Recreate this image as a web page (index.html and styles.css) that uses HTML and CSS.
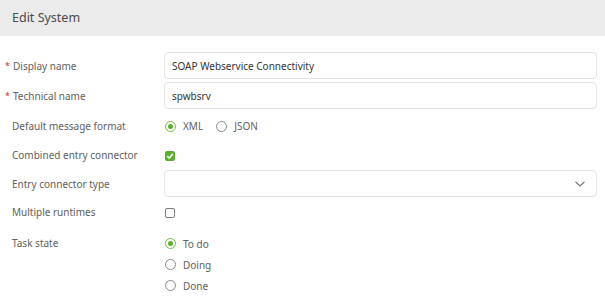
FILE: index.html
```html
<!DOCTYPE html>
<html lang="en">
<head>
  <meta charset="UTF-8">
  <title>Edit System</title>
  <link rel="stylesheet" href="styles.css">
</head>
<body>

  <div class="header">Edit System</div>

  <form class="form">
    <div class="row">
      <label class="label required">Display name</label>
      <input class="field" type="text" value="SOAP Webservice Connectivity">
    </div>
    <div class="row">
      <label class="label required">Technical name</label>
      <input class="field" type="text" value="spwbsrv">
    </div>
    <div class="row row-choice">
      <label class="label">Default message format</label>
      <div class="inline">
        <span class="radio checked"></span><span class="opt">XML</span>
        <span class="radio"></span><span class="opt">JSON</span>
      </div>
    </div>
    <div class="row row-check">
      <label class="label">Combined entry connector</label>
      <div><span class="check checked">
        <svg width="8" height="8" viewBox="0 0 8 8"><path d="M1.3 4.2 L3.2 6 L6.8 2" fill="none" stroke="#fff" stroke-width="1.6"/></svg>
      </span></div>
    </div>
    <div class="row">
      <label class="label">Entry connector type</label>
      <div class="field select">
        <svg width="10" height="6" viewBox="0 0 10 6"><path d="M0.5 0.7 L5 5 L9.5 0.7" fill="none" stroke="#777" stroke-width="1.2"/></svg>
      </div>
    </div>
    <div class="row row-check">
      <label class="label">Multiple runtimes</label>
      <div><span class="check"></span></div>
    </div>
    <div class="row row-task">
      <label class="label">Task state</label>
      <div class="stack">
        <div class="line"><span class="radio checked"></span><span class="opt">To do</span></div>
        <div class="line"><span class="radio"></span><span class="opt">Doing</span></div>
        <div class="line"><span class="radio"></span><span class="opt">Done</span></div>
      </div>
    </div>
  </form>

</body>
</html>
```

FILE: styles.css
```css
body {
  margin: 0;
  font-family: 'Noto Sans', sans-serif;
  font-size: 10px;
  color: #606060;
  background-color: #fff;
}
.header {
  height: 36px;
  line-height: 36px;
  padding-left: 12px;
  background-color: #ebebeb;
  color: #4a4a4a;
  font-size: 12.5px;
}
.form {
  display: flex;
  flex-direction: column;
  gap: 3px;
  padding: 16px 8px 0 12px;
}
.row {
  display: grid;
  grid-template-columns: 152px 1fr;
  align-items: center;
  min-height: 27px;
}
.row-choice {
  min-height: 28px;
}
.row-check {
  min-height: 24px;
}
.row-task {
  align-items: start;
  margin-top: 3px;
}
.row-task .label {
  line-height: 21px;
  padding-top: 3px;
}
.label {
  position: relative;
}
.required {
  padding-left: 1px;
}
.required::before {
  content: "*";
  position: absolute;
  left: -7px;
  top: 0;
  color: #d0342c;
  font-size: 9px;
}
.field {
  box-sizing: border-box;
  width: 100%;
  height: 27px;
  margin: 0;
  padding: 0 7px;
  border: 1px solid #e2e2e2;
  border-radius: 4px;
  font-family: inherit;
  font-size: 10px;
  color: #333;
  background-color: #fff;
  outline: none;
}
.select {
  display: flex;
  align-items: center;
  justify-content: flex-end;
  padding-right: 11px;
}
.inline {
  display: flex;
  align-items: center;
}
.radio {
  box-sizing: border-box;
  display: inline-block;
  width: 11px;
  height: 11px;
  border: 1px solid #8a8a8a;
  border-radius: 50%;
  margin-left: 1px;
  position: relative;
}
.radio.checked {
  border-color: #6abf3c;
}
.radio.checked::after {
  content: "";
  position: absolute;
  left: 2px;
  top: 2px;
  width: 5px;
  height: 5px;
  border-radius: 50%;
  background-color: #5cae2e;
}
.opt {
  margin-left: 7px;
  margin-right: 12px;
}
.check {
  box-sizing: border-box;
  display: inline-flex;
  align-items: center;
  justify-content: center;
  width: 10px;
  height: 10px;
  margin-left: 1px;
  border: 1px solid #777;
  border-radius: 2px;
  vertical-align: middle;
}
.check.checked {
  border-color: #5cae2e;
  background-color: #5cae2e;
}
.stack {
  display: flex;
  flex-direction: column;
  padding-top: 3px;
}
.line {
  display: flex;
  align-items: center;
  height: 21px;
}
```
